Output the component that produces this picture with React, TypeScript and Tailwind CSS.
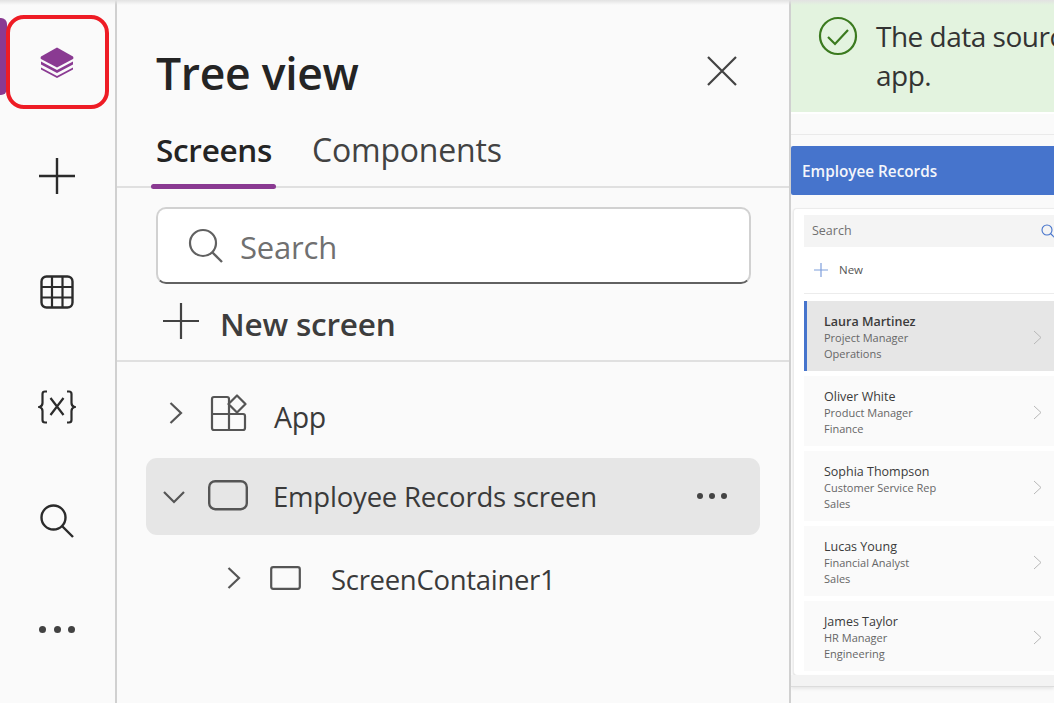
import React from "react";

const Ic = ({ children, w, h, vb, cls = "" }: { children: React.ReactNode; w: number; h: number; vb?: string; cls?: string }) => (
  <svg width={w} height={h} viewBox={vb ?? `0 0 ${w} ${h}`} fill="none" className={`block shrink-0 ${cls}`}>
    {children}
  </svg>
);

const people = [
  { n: "Laura Martinez", r: "Project Manager", d: "Operations", sel: true },
  { n: "Oliver White", r: "Product Manager", d: "Finance" },
  { n: "Sophia Thompson", r: "Customer Service Rep", d: "Sales" },
  { n: "Lucas Young", r: "Financial Analyst", d: "Sales" },
  { n: "James Taylor", r: "HR Manager", d: "Engineering" },
];

const railStroke = "#2b2b2b";

function Rail() {
  return (
    <div className="relative w-[117px] shrink-0 border-r-2 border-[#d0d0d0] flex flex-col items-center pt-[44px] pr-[1px]">
      <div className="absolute left-0 top-[18px] w-[7px] h-[77px] rounded-r-[6px] bg-[#8a3a92]" />
      <div className="absolute left-[6px] top-[15px] w-[103px] h-[94px] rounded-[18px] border-[4px] border-[#ee1c25]" />
      <div className="h-[34px] flex items-center">
        <Ic w={36} h={36}>
          <path d="M18 4.5 L34 13.5 Q35 15 34 16 L18 24.5 L2 16 Q1 15 2 13.5 Z" fill="#8a3a92" />
          <path d="M2 18.5 L18 27 L34 18.5 V21.5 L18 30 L2 21.5 Z" fill="#8a3a92" />
          <path d="M2 24.5 L18 33 L34 24.5 V26.5 L18 35 L2 26.5 Z" fill="#8a3a92" />
        </Ic>
      </div>
      <div className="mt-[80px] h-[36px] flex items-center">
        <Ic w={36} h={36}>
          <path d="M18 0V36M0 18H36" stroke={railStroke} strokeWidth="2.4" />
        </Ic>
      </div>
      <div className="mt-[81px] h-[34px] flex items-center">
        <Ic w={34} h={34}>
          <rect x="1.5" y="1.5" width="31" height="31" rx="5" stroke={railStroke} strokeWidth="2.4" />
          <path d="M12 1.5V32.5M22.5 1.5V32.5M1.5 12H32.5M1.5 22.5H32.5" stroke={railStroke} strokeWidth="2.2" />
        </Ic>
      </div>
      <div className="mt-[81px] h-[34px] flex items-center">
        <Ic w={38} h={34}>
          <path d="M9 1.5H7Q4.5 1.5 4.5 4V13Q4.5 16 1.5 17Q4.5 18 4.5 21V30Q4.5 32.5 7 32.5H9" stroke={railStroke} strokeWidth="2.2" />
          <path d="M29 1.5H31Q33.5 1.5 33.5 4V13Q33.5 16 36.5 17Q33.5 18 33.5 21V30Q33.5 32.5 31 32.5H29" stroke={railStroke} strokeWidth="2.2" />
          <path d="M12.5 8L25.5 25M25.5 8L12.5 25" stroke={railStroke} strokeWidth="2.2" />
        </Ic>
      </div>
      <div className="mt-[80px] h-[34px] flex items-center">
        <Ic w={34} h={34}>
          <circle cx="13.5" cy="13.5" r="12" stroke={railStroke} strokeWidth="2.4" />
          <path d="M22 22L33 33" stroke={railStroke} strokeWidth="2.4" />
        </Ic>
      </div>
      <div className="mt-[88px] flex gap-[7.5px]">
        <span className="w-[7px] h-[7px] rounded-full bg-[#424242]" />
        <span className="w-[7px] h-[7px] rounded-full bg-[#424242]" />
        <span className="w-[7px] h-[7px] rounded-full bg-[#424242]" />
      </div>
    </div>
  );
}

function TreePanel() {
  return (
    <div className="w-[674px] shrink-0 border-r-2 border-[#d0d0d0] flex flex-col">
      <div className="h-[122px] pl-[39px] pr-[52px] pt-[42px] flex items-start justify-between">
        <div className="text-[44.5px] leading-[62px] font-semibold text-[#242424] tracking-[-0.3px]">Tree view</div>
        <Ic w={30} h={30} cls="mt-[14px]">
          <path d="M1 1L29 29M29 1L1 29" stroke="#424242" strokeWidth="2.2" />
        </Ic>
      </div>
      <div className="h-[66px] border-b-2 border-[#e0e0e0] flex pl-[34px]">
        <div className="relative w-[125px] h-[66px]">
          <div className="pl-[5px] text-[31.5px] leading-[56px] font-semibold text-[#242424] tracking-[-0.3px]">Screens</div>
          <div className="absolute left-0 right-0 bottom-[-1px] h-[5px] rounded-[3px] bg-[#8a3a92]" />
        </div>
        <div className="ml-[36px] text-[32px] leading-[56px] text-[#424242] tracking-[-0.2px]">Components</div>
      </div>
      <div className="ml-[39px] mt-[19px] w-[595px] h-[77px] rounded-[10px] bg-white border-2 border-[#d1d1d1] border-b-[#616161] flex items-center pl-[30px]">
        <Ic w={36} h={36}>
          <circle cx="15" cy="15" r="13" stroke="#616161" strokeWidth="2.2" />
          <path d="M24.5 24.5L34 34" stroke="#616161" strokeWidth="2.4" />
        </Ic>
        <span className="ml-[16px] mt-[4px] text-[31px] text-[#707070] tracking-[-0.2px]">Search</span>
      </div>
      <div className="h-[78px] border-b-2 border-[#e0e0e0] flex items-center pl-[46px]">
        <Ic w={36} h={36} cls="-mt-[3px]">
          <path d="M18 0V36M0 18H36" stroke="#424242" strokeWidth="2.2" />
        </Ic>
        <span className="ml-[21px] mt-[3px] text-[31.5px] font-semibold text-[#3d3d3d] tracking-[-0.2px]">New screen</span>
      </div>
      <div className="h-[96px] pt-[11px] flex items-center pl-[51px]">
        <Ic w={16} h={24} cls="-mt-[6px]">
          <path d="M2.5 2L13 12L2.5 22" stroke="#555" strokeWidth="2.2" />
        </Ic>
        <Ic w={38} h={38} cls="ml-[26px] -mt-[6px]">
          <path d="M19 20V5Q19 3 17 3H4Q2 3 2 5V34Q2 36 4 36H33Q35 36 35 34V22Q35 20 33 20H2M19 20V36" stroke="#555" strokeWidth="2.2" />
          <path d="M27 1.5L35.5 10L27 18.5L18.5 10Z" stroke="#555" strokeWidth="2.2" strokeLinejoin="round" fill="#fafafa" />
        </Ic>
        <span className="ml-[26px] mt-[4px] text-[28.5px] text-[#3a3a3a] tracking-[-0.3px]">App</span>
      </div>
      <div className="ml-[29px] w-[614px] h-[77px] rounded-[11px] bg-[#e6e6e6] flex items-center pl-[16px]">
        <Ic w={24} h={14}>
          <path d="M2 2L12 12L22 2" stroke="#555" strokeWidth="2.2" />
        </Ic>
        <Ic w={40} h={32} cls="ml-[22px] -mt-[2px]">
          <rect x="1.2" y="1.2" width="37.6" height="28" rx="6" stroke="#555" strokeWidth="2.4" />
        </Ic>
        <span className="ml-[25px] text-[27.5px] text-[#3a3a3a] tracking-[-0.2px]">Employee Records screen</span>
        <span className="ml-auto mr-[33px] -mt-[2px] flex gap-[6px]">
          <span className="w-[6px] h-[6px] rounded-full bg-[#444]" />
          <span className="w-[6px] h-[6px] rounded-full bg-[#444]" />
          <span className="w-[6px] h-[6px] rounded-full bg-[#444]" />
        </span>
      </div>
      <div className="h-[89px] flex items-center pl-[109px]">
        <Ic w={16} h={24} cls="-mt-[4px]">
          <path d="M2.5 2L13 12L2.5 22" stroke="#555" strokeWidth="2.2" />
        </Ic>
        <Ic w={31} h={24} cls="ml-[28px] -mt-[4px]">
          <rect x="1.2" y="1.2" width="28.6" height="21.6" rx="2" stroke="#555" strokeWidth="2.2" />
        </Ic>
        <span className="ml-[30px] text-[27.5px] text-[#3a3a3a] tracking-[-0.3px]">ScreenContainer1</span>
      </div>
    </div>
  );
}

function Preview() {
  return (
    <div className="flex-1 min-w-0 overflow-hidden flex flex-col bg-[#fafafa]">
      <div className="h-[112px] shrink-0 bg-[#e3f3df] flex pl-[27px] pt-[16px]">
        <Ic w={40} h={40} cls="shrink-0">
          <circle cx="20" cy="20" r="18" stroke="#3b7a1f" strokeWidth="2.2" />
          <path d="M10 21L17 28L30 14" stroke="#3b7a1f" strokeWidth="2.2" />
        </Ic>
        <div className="ml-[18px] pt-[1px] w-[230px] text-[28px] leading-[39px] text-[#333] whitespace-nowrap tracking-[-0.5px]">
          The data source is
          <br />
          app.
        </div>
      </div>
      <div className="h-[2px] shrink-0 bg-white" />
      <div className="h-[21px] shrink-0 border-b border-[#eaeaea]" />
      <div className="mt-[11px] h-[49px] shrink-0 bg-[#4674cc] rounded-l-[2px] flex items-center pl-[11px] pt-[2px] text-[15.3px] font-semibold text-[#f4f6fb]">
        Employee Records
      </div>
      <div className="ml-[2px] mt-[13px] h-[467px] shrink-0 bg-white rounded-l-[4px] border-l border-t border-[#ececec] pl-[10px] shadow-[0_1px_2px_rgba(0,0,0,0.12)]">
        <div className="mt-[6px] h-[32px] bg-[#f4f4f4] flex items-center pl-[8px] pt-[1px] text-[12.5px] text-[#707070]">
          Search
          <Ic w={16} h={16} cls="ml-auto -mr-[3px]">
            <circle cx="6" cy="6" r="5" stroke="#4674cc" strokeWidth="1.1" />
            <path d="M9.5 9.5L15 15" stroke="#4674cc" strokeWidth="1.1" />
          </Ic>
        </div>
        <div className="h-[47px] border-b border-[#ececec] flex items-center pl-[10px]">
          <Ic w={14} h={14}>
            <path d="M7 0V14M0 7H14" stroke="#7f9fdc" strokeWidth="1.2" />
          </Ic>
          <span className="ml-[11px] text-[11.5px] text-[#555]">New</span>
        </div>
        <div className="mt-[7px] flex flex-col gap-[5px]">
          {people.map((p) => (
            <div
              key={p.n}
              className={`h-[70px] flex items-center pr-[12px] ${
                p.sel ? "bg-[#e6e6e6] border-l-[3px] border-[#4674cc] pl-[17px]" : "bg-[#fafafa] pl-[20px]"
              }`}
            >
              <div className="flex-1 min-w-0 pt-[4px]">
                <div className={`text-[12.5px] leading-[16px] text-[#3b3b3b] ${p.sel ? "font-semibold" : ""}`}>{p.n}</div>
                <div className={`text-[11px] leading-[16px] text-[#666] ${p.sel ? "font-medium" : ""}`}>{p.r}</div>
                <div className={`text-[11px] leading-[15.5px] text-[#666] ${p.sel ? "font-medium" : ""}`}>{p.d}</div>
              </div>
              <Ic w={9} h={15} cls="mt-[2px]">
                <path d="M1 1L8 7.5L1 14" stroke="#b8b8b8" strokeWidth="1" />
              </Ic>
            </div>
          ))}
        </div>
      </div>
      <div className="h-[12px] shrink-0 bg-[#f3f3f3] border-b border-[#dcdcdc] shadow-[0_2px_3px_rgba(0,0,0,0.08)]" />
    </div>
  );
}

export default function App() {
  return (
    <div className="relative w-[1054px] h-[703px] overflow-hidden bg-[#fafafa] flex font-['Open_Sans','Noto_Sans',sans-serif]">
      <Rail />
      <TreePanel />
      <Preview />
      <div className="absolute inset-x-0 top-0 h-[5px] bg-gradient-to-b from-[#e2e2e2] to-transparent pointer-events-none" />
    </div>
  );
}
